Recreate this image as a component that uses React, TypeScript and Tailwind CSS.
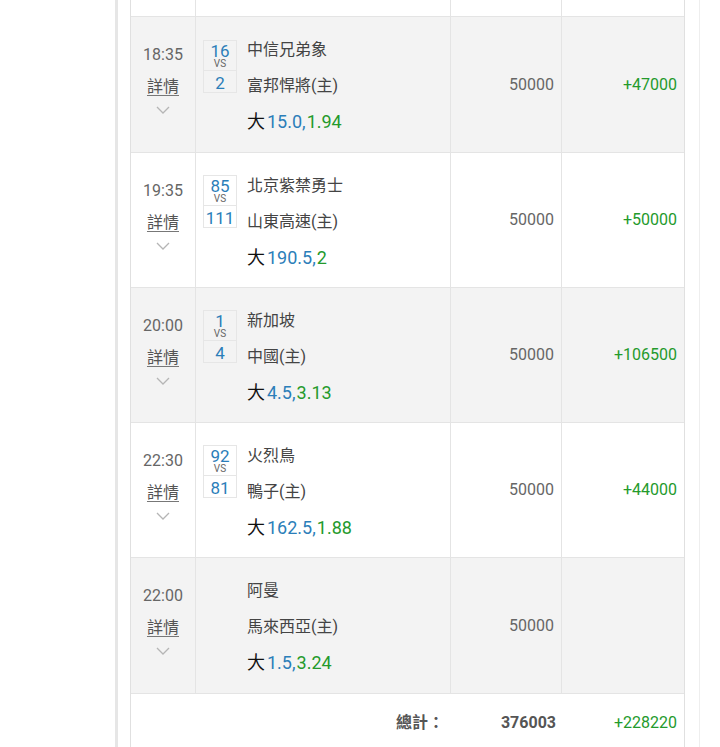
import React from "react";

type Row = {
  time: string;
  s1?: string;
  s2?: string;
  t1: string;
  t2: string;
  line: string;
  odds: string;
  bet: string;
  win?: string;
  gray: boolean;
  h: string;
};

const rows: Row[] = [
  { time: "18:35", s1: "16", s2: "2", t1: "中信兄弟象", t2: "富邦悍將(主)", line: "15.0,", odds: "1.94", bet: "50000", win: "+47000", gray: true, h: "h-[135px]" },
  { time: "19:35", s1: "85", s2: "111", t1: "北京紫禁勇士", t2: "山東高速(主)", line: "190.5,", odds: "2", bet: "50000", win: "+50000", gray: false, h: "h-[134px]" },
  { time: "20:00", s1: "1", s2: "4", t1: "新加坡", t2: "中國(主)", line: "4.5,", odds: "3.13", bet: "50000", win: "+106500", gray: true, h: "h-[134px]" },
  { time: "22:30", s1: "92", s2: "81", t1: "火烈鳥", t2: "鴨子(主)", line: "162.5,", odds: "1.88", bet: "50000", win: "+44000", gray: false, h: "h-[134px]" },
  { time: "22:00", t1: "阿曼", t2: "馬來西亞(主)", line: "1.5,", odds: "3.24", bet: "50000", gray: true, h: "h-[135px]" },
];

function Chevron() {
  return (
    <svg width="14" height="8" viewBox="0 0 14 8" fill="none">
      <path d="M1 1 L7 7 L13 1" stroke="#b5b5b5" strokeWidth="1.3" />
    </svg>
  );
}

export default function App() {
  return (
    <div
      className="w-[720px] h-[747px] bg-white overflow-hidden flex"
      style={{ fontFamily: "Roboto, 'Noto Sans CJK TC', sans-serif" }}
    >
      <div className="w-[115px] shrink-0" />
      <div className="w-[3px] shrink-0 bg-[#e6e6e6]" />
      <div className="w-[12px] shrink-0" />
      <div className="w-[555px] shrink-0 flex flex-col border-x border-[#e0e0e0]">
        <div className="h-[17px] flex border-b border-[#e4e4e4]">
          <div className="w-[65px] border-r border-[#e4e4e4]" />
          <div className="w-[255px] border-r border-[#e4e4e4]" />
          <div className="w-[111px] border-r border-[#e4e4e4]" />
          <div className="flex-1" />
        </div>
        {rows.map((r, i) => (
          <div
            key={i}
            className={`${r.h} box-content flex border-b border-[#e4e4e4] ${r.gray ? "bg-[#f3f3f3]" : "bg-white"}`}
          >
            <div className="w-[65px] border-r border-[#e4e4e4] flex flex-col items-center justify-center text-[16px] text-[#666]">
              <div className="leading-[20px] mt-[-10px]">{r.time}</div>
              <div className="leading-[20px] mt-[12px] text-[#555] underline underline-offset-[3px] decoration-[#777]">詳情</div>
              <div className="mt-[9px]"><Chevron /></div>
            </div>
            <div className="w-[255px] border-r border-[#e4e4e4] flex items-center pl-[7px]">
              <div className="w-[34px] shrink-0 flex items-center">
                {r.s1 && (
                  <div className="w-[34px] h-[53px] border border-[#e6e6e6] flex flex-col items-center mt-[-37px]">
                    <div className="text-[17px] leading-[17px] text-[#2b7eb9] mt-[2px]">{r.s1}</div>
                    <div className="text-[10px] leading-[8px] text-[#666] w-full text-center border-b border-[#e6e6e6] pb-[2px]">VS</div>
                    <div className="text-[17px] leading-[22px] text-[#2b7eb9] mt-[1px]">{r.s2}</div>
                  </div>
                )}
              </div>
              <div className="ml-[10px] flex flex-col text-[16px] text-[#444]">
                <div className="leading-[20px] mt-[4px]">{r.t1}</div>
                <div className="leading-[20px] mt-[16px]">{r.t2}</div>
                <div className="leading-[22px] mt-[15px] text-[18px] text-[#111]">
                  大<span className="ml-[2px] text-[#2b7eb9]">{r.line}</span>
                  <span className="ml-[1px] text-[#249a2c]">{r.odds}</span>
                </div>
              </div>
            </div>
            <div className="w-[111px] border-r border-[#e4e4e4] flex items-center justify-end pr-[7px] text-[16px] text-[#666]">
              {r.bet}
            </div>
            <div className="flex-1 flex items-center justify-end pr-[7px] text-[16px] text-[#249a2c]">
              {r.win}
            </div>
          </div>
        ))}
        <div className="flex-1 flex items-start pt-[17px] text-[16px]">
          <div className="w-[321px] flex justify-end pr-[8px] font-bold text-[#555]">總計：</div>
          <div className="w-[111px] flex justify-end pr-[7px] font-bold text-[#555]">376003</div>
          <div className="flex-1 flex justify-end pr-[7px] text-[#249a2c]">+228220</div>
        </div>
      </div>
      <div className="w-[14px] shrink-0" />
      <div className="w-[1px] shrink-0 bg-[#eeeeee]" />
    </div>
  );
}
